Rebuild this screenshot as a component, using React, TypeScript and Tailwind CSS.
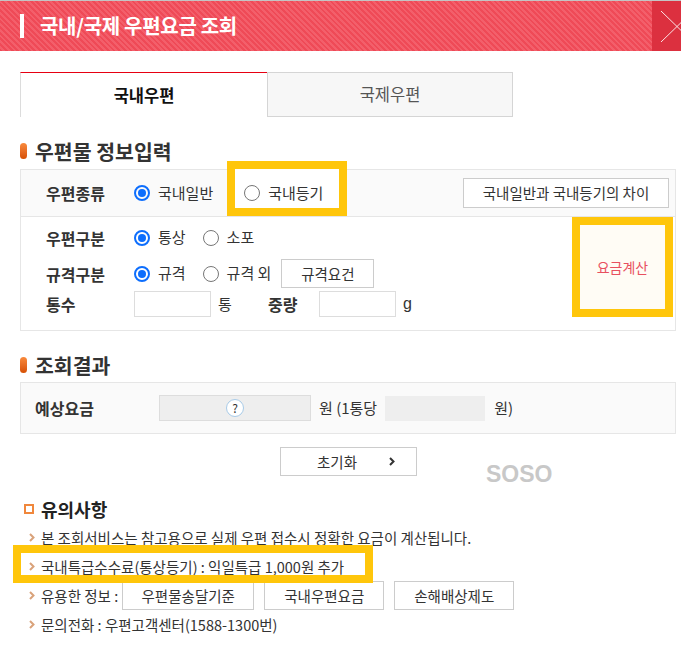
import React from 'react';

const font = "[font-family:'Noto_Sans_CJK_KR','Noto_Sans',sans-serif]";

function Radio({ checked }: { checked?: boolean }) {
  if (checked) {
    return (
      <span className="flex h-4 w-4 shrink-0 items-center justify-center rounded-full border-2 border-[#0d6efd]">
        <span className="h-2 w-2 rounded-full bg-[#0d6efd]" />
      </span>
    );
  }
  return <span className="h-4 w-4 shrink-0 rounded-full border border-[#767676] bg-white" />;
}

function Choice({ checked, label }: { checked?: boolean; label: string }) {
  return (
    <span className="flex items-center gap-2 text-[15px] text-[#333]">
      <Radio checked={checked} />
      {label}
    </span>
  );
}

function Arrow() {
  return (
    <svg width="6" height="9" viewBox="0 0 6 9" className="shrink-0">
      <path d="M1 1l3.5 3.5L1 8" stroke="#d9a27a" strokeWidth="2" fill="none" />
    </svg>
  );
}

function SectionTitle({ title }: { title: string }) {
  return (
    <div className="flex h-[28px] items-center gap-2">
      <span className="h-4 w-[7px] rounded-full bg-linear-to-b from-[#f98a3c] to-[#d64f00]" />
      <span className="text-[20.5px] font-bold text-[#333]">{title}</span>
    </div>
  );
}

export default function App() {
  return (
    <div className={`relative h-[651px] w-[681px] overflow-hidden bg-white ${font}`}>
      {/* header */}
      <header className="flex h-[51px] border-t border-[#c4c4c4] bg-[repeating-linear-gradient(45deg,#ef4a57_0px,#ef4a57_2px,#f35f6b_2px,#f35f6b_4px)]">
        <div className="flex flex-1 items-center pl-5">
          <span className="h-6 w-1 bg-white" />
          <h1 className="ml-4 text-[20px] font-bold text-white tracking-[-0.3px]">국내/국제 우편요금 조회</h1>
        </div>
        <button className="flex w-[29px] items-center overflow-hidden bg-[#dc303f]">
          <svg width="32" height="31" viewBox="0 0 32 31" className="ml-[9px] shrink-0">
            <path d="M0 0L32 31M0 31L32 0" stroke="#fbe3e5" strokeWidth="1" />
          </svg>
        </button>
      </header>

      <main className="pl-5 pr-[5px] text-[#333]">
        {/* tabs */}
        <div className="mt-[21px] flex h-[45px]">
          <div className="flex w-[247px] items-center justify-center border-t border-l border-t-[#e60012] border-l-[#dcdcdc] text-[16.5px] font-bold text-[#111]">
            국내우편
          </div>
          <div className="flex w-[246px] items-center justify-center border border-[#d5d5d5] bg-[#f7f7f7] text-[16.5px] text-[#555]">
            국제우편
          </div>
        </div>

        <div className="mt-5">
          <SectionTitle title="우편물 정보입력" />
        </div>

        {/* form */}
        <div className="mt-1 border border-[#e6e6e6]">
          <div className="flex h-[47px] items-center border-b border-[#e6e6e6] bg-[#fafafa] pl-[25px] pr-[6px]">
            <span className="w-[88px] text-[16px] font-bold text-[#333]">우편종류</span>
            <Choice checked label="국내일반" />
            <div className="relative ml-[31px] flex items-center">
              <span className="absolute -left-[17px] -top-[21px] -bottom-[12px] w-[120px] border-[8px] border-[#ffc60b] bg-white" />
              <span className="relative">
                <Choice label="국내등기" />
              </span>
            </div>
            <button className="ml-auto h-[30px] w-[206px] border border-[#cccccc] bg-white text-[14.5px] text-[#333]">
              국내일반과 국내등기의 차이
            </button>
          </div>

          <div className="flex">
            <div className="flex flex-1 flex-col pl-[25px] pt-[6px]">
              <div className="flex h-[29px] items-center">
                <span className="w-[88px] text-[16px] font-bold">우편구분</span>
                <Choice checked label="통상" />
                <span className="ml-[17px]">
                  <Choice label="소포" />
                </span>
              </div>
              <div className="mt-[7px] flex h-[29px] items-center">
                <span className="w-[88px] text-[16px] font-bold">규격구분</span>
                <Choice checked label="규격" />
                <span className="ml-[17px]">
                  <Choice label="규격 외" />
                </span>
                <button className="ml-[10px] h-[29px] w-[93px] border border-[#cccccc] bg-white text-[14.5px] text-[#333]">
                  규격요건
                </button>
              </div>
              <div className="mt-[3px] flex h-[26px] items-center">
                <span className="w-[88px] text-[16px] font-bold">통수</span>
                <span className="h-[26px] w-[77px] border border-[#dddddd] bg-white" />
                <span className="ml-[7px] w-[50px] text-[15px]">통</span>
                <span className="w-[51px] text-[16px] font-bold">중량</span>
                <span className="h-[26px] w-[77px] border border-[#dddddd] bg-white" />
                <span className="ml-[7px] text-[16px] [font-family:'Liberation_Sans',sans-serif]">g</span>
              </div>
              <div className="h-[13px]" />
            </div>
            <button className="mr-[2px] flex h-[100px] w-[101px] items-center justify-center self-start border-[8px] border-[#ffc60b] bg-[#fffcf5] text-[14px] text-[#e8505f]">
              요금계산
            </button>
          </div>
        </div>

        <div className="mt-5">
          <SectionTitle title="조회결과" />
        </div>

        <div className="mt-[3px] flex h-[52px] items-center border border-[#e6e6e6] bg-[#fafafa] pl-[14px]">
          <span className="w-[124px] text-[16px] font-bold">예상요금</span>
          <span className="flex h-[26px] w-[152px] items-center justify-center border border-[#dddddd] bg-[#eeeeee]">
            <span className="flex h-[18px] w-[18px] items-center justify-center rounded-full border border-[#a8cbe8] bg-white text-[12px] leading-none text-[#333]">
              ?
            </span>
          </span>
          <span className="ml-[8px] text-[15px]">원 (1통당</span>
          <span className="ml-[8px] h-[25px] w-[100px] bg-[#eeeeee]" />
          <span className="ml-[9px] text-[15px]">원)</span>
        </div>

        <button className="mx-auto mt-[13px] flex h-[29px] w-[137px] items-center justify-center gap-[32px] border border-[#cccccc] bg-white pl-[16px] text-[14.5px] text-[#333]">
          초기화
          <svg width="6" height="9" viewBox="0 0 6 9">
            <path d="M1 1l3.5 3.5L1 8" stroke="#333" strokeWidth="2" fill="none" />
          </svg>
        </button>

        {/* notes */}
        <div className="mt-[19px] flex h-[28px] items-center pl-1">
          <span className="h-[10px] w-[10px] border-2 border-[#f0873c]" />
          <span className="ml-[7px] text-[18px] font-bold text-[#222]">유의사항</span>
        </div>
        <ul className="pl-[9px] text-[14.5px] text-[#333]">
          <li className="flex h-[29px] items-center gap-[6px]">
            <Arrow />본 조회서비스는 참고용으로 실제 우편 접수시 정확한 요금이 계산됩니다.
          </li>
          <li className="relative flex h-[29px] items-center gap-[6px]">
            <span className="absolute -left-[16px] top-[-7px] h-[38px] w-[360px] border-[8px] border-[#ffc60b]" />
            <Arrow />국내특급수수료(통상등기) : 익일특급 1,000원 추가
          </li>
          <li className="flex h-[29px] items-center gap-[6px]">
            <Arrow />유용한 정보 :
            <button className="-ml-[2px] h-[29px] w-[132px] border border-[#cccccc] bg-white text-[14.5px]">우편물송달기준</button>
            <button className="ml-[4px] h-[29px] w-[120px] border border-[#cccccc] bg-white text-[14.5px]">국내우편요금</button>
            <button className="ml-[4px] h-[29px] w-[120px] border border-[#cccccc] bg-white text-[14.5px]">손해배상제도</button>
          </li>
          <li className="flex h-[29px] items-center gap-[6px]">
            <Arrow />문의전화 : 우편고객센터(1588-1300번)
          </li>
        </ul>
      </main>

      <span className="absolute left-[486px] top-[457px] text-[23px] font-bold text-[#c8c8c8] [font-family:'Liberation_Sans',sans-serif]">
        SOSO
      </span>
    </div>
  );
}
